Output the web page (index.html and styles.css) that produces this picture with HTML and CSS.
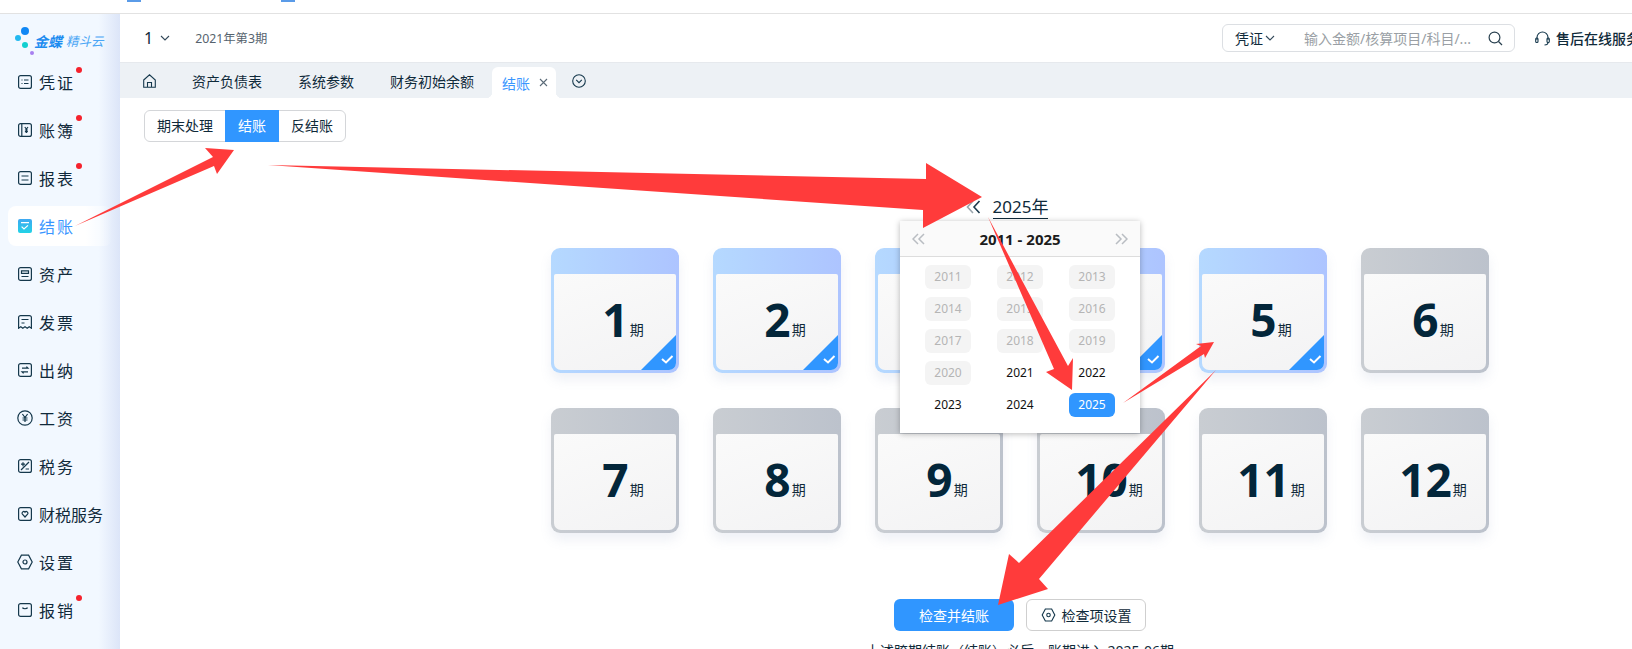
FILE: index.html
```html
<!DOCTYPE html>
<html lang="zh-CN">
<head>
    <meta charset="UTF-8">
    <title>结账</title>
    <link rel="stylesheet" href="styles.css">
</head>
<body>
<div class="page">
    <div class="strip">
        <i class="strip-mark"></i>
        <i class="strip-mark strip-mark-2"></i>
    </div>
    <div class="app">
        <aside class="side">
            <div class="logo">
                <svg class="logo-dots" width="24" height="34" viewBox="0 0 24 34">
                    <circle cx="10" cy="8" r="4" fill="#0f87f5"/>
                    <circle cx="3" cy="15" r="3" fill="#22b8f0"/>
                    <circle cx="10" cy="22" r="3" fill="#12cfd0"/>
                    <circle cx="17" cy="30" r="2" fill="#a880f0"/>
                </svg>
                <span class="logo-a">金蝶</span><span class="logo-b">精斗云</span>
            </div>
            <ul class="menu">
                <li class="menu-item">
                    <svg class="ico" viewBox="0 0 14 14"><rect x=".6" y=".6" width="12.8" height="12.8" rx="2"/><path d="M3.5 5h1M6 5h4.5M3.5 8.5h1M6 8.5h4.5"/></svg>
                    <span class="two">凭证</span><b class="dot"></b>
                </li>
                <li class="menu-item">
                    <svg class="ico" viewBox="0 0 14 14"><rect x=".6" y=".6" width="12.8" height="12.8" rx="2"/><path d="M3.8 .6v12.8M6.8 4l1.6 2 1.6-2M8.4 6v4M6.9 7h3M6.9 8.6h3"/></svg>
                    <span class="two">账簿</span><b class="dot"></b>
                </li>
                <li class="menu-item">
                    <svg class="ico" viewBox="0 0 14 14"><rect x=".6" y=".6" width="12.8" height="12.8" rx="2"/><path d="M3.5 5h7M3.5 9h7"/></svg>
                    <span class="two">报表</span><b class="dot"></b>
                </li>
                <li class="menu-item menu-on">
                    <svg class="ico ico-on" viewBox="0 0 14 14">
                        <defs>
                            <linearGradient id="icoOn" x1="0" y1="0" x2="0" y2="1">
                                <stop offset="0" stop-color="#3fa8f2"/>
                                <stop offset="1" stop-color="#22d3e6"/>
                            </linearGradient>
                        </defs>
                        <rect width="14" height="14" rx="2" fill="url(#icoOn)"/>
                        <path d="M3 3.6h8M3.6 7.6l2.4 2.4 4-3.6"/>
                    </svg>
                    <span class="two">结账</span>
                </li>
                <li class="menu-item">
                    <svg class="ico" viewBox="0 0 14 14"><rect x=".6" y=".6" width="12.8" height="12.8" rx="2"/><path d="M3.5 3.8h7v2.6h-7zM3.5 9.5h7"/></svg>
                    <span class="two">资产</span>
                </li>
                <li class="menu-item">
                    <svg class="ico" viewBox="0 0 14 14"><path d="M2.6.6h8.8a2 2 0 0 1 2 2v10.6l-2.2-1.4-2 1.4-2.2-1.4-2.2 1.4-2-1.4-2.2 1.4V2.6a2 2 0 0 1 2-2zM3.5 4.5h7M3.5 8h3"/></svg>
                    <span class="two">发票</span>
                </li>
                <li class="menu-item">
                    <svg class="ico" viewBox="0 0 14 14"><rect x=".6" y=".6" width="12.8" height="12.8" rx="2"/><path d="M4 5.2h6L8.4 3.6M10 8.8H4l1.6 1.6"/></svg>
                    <span class="two">出纳</span>
                </li>
                <li class="menu-item">
                    <svg class="ico ico-big" viewBox="0 0 16 16"><circle cx="8" cy="8" r="7.2"/><path d="M5.4 4l2.6 3.6L10.6 4M8 7.6V12M5.5 8h5M5.5 10h5"/></svg>
                    <span class="two">工资</span>
                </li>
                <li class="menu-item">
                    <svg class="ico" viewBox="0 0 14 14"><rect x=".6" y=".6" width="12.8" height="12.8" rx="2"/><path d="M3 11l8-8M3 5.2h4M5 3.2v4M7.6 10h3.4"/></svg>
                    <span class="two">税务</span>
                </li>
                <li class="menu-item">
                    <svg class="ico" viewBox="0 0 14 14"><rect x=".6" y=".6" width="12.8" height="12.8" rx="2"/><path d="M7 10L4.4 7.2a1.6 1.6 0 0 1 2.6-2 1.6 1.6 0 0 1 2.6 2z"/></svg>
                    <span>财税服务</span>
                </li>
                <li class="menu-item">
                    <svg class="ico ico-big" viewBox="0 0 16 16"><path d="M4.4 1.2h7.2L15.2 8l-3.6 6.8H4.4L.8 8z"/><circle cx="8" cy="8" r="2"/></svg>
                    <span class="two">设置</span>
                </li>
                <li class="menu-item">
                    <svg class="ico" viewBox="0 0 14 14"><rect x=".6" y=".6" width="12.8" height="12.8" rx="2"/><path d="M4.4 4.6c.8 1.5 4.400 1.500 5.200 0"/></svg>
                    <span class="two">报销</span><b class="dot"></b>
                </li>
            </ul>
        </aside>

        <main class="main">
            <header class="head">
                <div class="head-left">
                    <span class="book">1</span>
                    <svg class="chev" width="10" height="6" viewBox="0 0 10 6"><path d="M1 1l4 4 4-4"/></svg>
                    <span class="period">2021年第3期</span>
                </div>
                <div class="search">
                    <span class="search-type">凭证</span>
                    <svg class="chev" width="10" height="6" viewBox="0 0 10 6"><path d="M1 1l4 4 4-4"/></svg>
                    <span class="search-text">输入金额/核算项目/科目/...</span>
                    <svg class="search-ico" width="15" height="15" viewBox="0 0 15 15"><circle cx="6.500" cy="6.500" r="5.400"/><path d="M10.500 10.500l3.500 3.500"/></svg>
                </div>
                <div class="service">
                    <svg class="service-ico" width="15" height="15" viewBox="0 0 15 15"><path d="M2 9V6.500a5.500 5.500 0 0 1 11 0V9"/><rect x=".7" y="7" width="2.300" height="4.500" rx="1"/><rect x="12" y="7" width="2.300" height="4.500" rx="1"/><path d="M13 11.500c0 1.500-1.500 2.500-3.500 2.500"/></svg>
                    <span>售后在线服务</span>
                </div>
            </header>

            <nav class="tabs">
                <svg class="tab-home" width="13" height="14" viewBox="0 0 13 14"><path d="M.7 6L6.500.8 12.300 6v7.300H.7zM4.500 13.300V8.500h4v4.800"/></svg>
                <span class="tab">资产负债表</span>
                <span class="tab">系统参数</span>
                <span class="tab">财务初始余额</span>
                <span class="tab-on">结账
                    <svg class="tab-x" width="9" height="9" viewBox="0 0 9 9"><path d="M1 1l7 7M8 1L1 8"/></svg>
                </span>
                <svg class="tab-more" width="14" height="14" viewBox="0 0 14 14"><circle cx="7" cy="7" r="6.300"/><path d="M4.200 5.800L7 8.600l2.800-2.800"/></svg>
            </nav>

            <section class="content">
                <div class="switch">
                    <span class="switch-item">期末处理</span>
                    <span class="switch-item switch-on">结账</span>
                    <span class="switch-item">反结账</span>
                </div>

                <div class="year-row">
                    <svg class="year-prev" width="15" height="14" viewBox="0 0 15 14"><path class="back" d="M7 1L1.500 7 7 13"/><path d="M13.500 1L8 7l5.500 6"/></svg>
                    <span class="year-now">2025年</span>
                </div>

                <div class="cards">
                    <div class="card"><div class="card-body"><span class="num">1</span><span class="unit">期</span>
                        <svg class="mark" width="35" height="35" viewBox="0 0 35 35"><path class="mark-bg" d="M35 0v35H0z"/><path class="mark-ok" d="M21 24l4 3.500 6.500-6.500"/></svg></div></div>
                    <div class="card"><div class="card-body"><span class="num">2</span><span class="unit">期</span>
                        <svg class="mark" width="35" height="35" viewBox="0 0 35 35"><path class="mark-bg" d="M35 0v35H0z"/><path class="mark-ok" d="M21 24l4 3.500 6.500-6.500"/></svg></div></div>
                    <div class="card"><div class="card-body"><span class="num">3</span><span class="unit">期</span></div></div>
                    <div class="card"><div class="card-body"><span class="num">4</span><span class="unit">期</span>
                        <svg class="mark" width="35" height="35" viewBox="0 0 35 35"><path class="mark-bg" d="M35 0v35H0z"/><path class="mark-ok" d="M21 24l4 3.500 6.500-6.500"/></svg></div></div>
                    <div class="card"><div class="card-body"><span class="num">5</span><span class="unit">期</span>
                        <svg class="mark" width="35" height="35" viewBox="0 0 35 35"><path class="mark-bg" d="M35 0v35H0z"/><path class="mark-ok" d="M21 24l4 3.500 6.500-6.500"/></svg></div></div>
                    <div class="card card-off"><div class="card-body"><span class="num">6</span><span class="unit">期</span></div></div>
                    <div class="card card-off"><div class="card-body"><span class="num">7</span><span class="unit">期</span></div></div>
                    <div class="card card-off"><div class="card-body"><span class="num">8</span><span class="unit">期</span></div></div>
                    <div class="card card-off"><div class="card-body"><span class="num">9</span><span class="unit">期</span></div></div>
                    <div class="card card-off"><div class="card-body"><span class="num">10</span><span class="unit">期</span></div></div>
                    <div class="card card-off"><div class="card-body"><span class="num">11</span><span class="unit">期</span></div></div>
                    <div class="card card-off"><div class="card-body"><span class="num">12</span><span class="unit">期</span></div></div>
                </div>

                <div class="actions">
                    <span class="btn btn-main">检查并结账</span>
                    <span class="btn">
                        <svg class="btn-ico" width="15" height="14" viewBox="0 0 16 16"><path d="M4.400 1.200h7.200L15.200 8l-3.600 6.800H4.400L.8 8z"/><circle cx="8" cy="8" r="2"/></svg>
                        检查项设置
                    </span>
                </div>
                <p class="note">上述跨期结账（结账）必后，账期进入 2025-06期</p>

                <div class="pop">
                    <div class="pop-head">
                        <svg class="pop-arr" width="13" height="12" viewBox="0 0 13 12"><path d="M6 1L1 6l5 5M12 1L7 6l5 5"/></svg>
                        <span class="pop-title">2011 - 2025</span>
                        <svg class="pop-arr" width="13" height="12" viewBox="0 0 13 12"><path d="M1 1l5 5-5 5M7 1l5 5-5 5"/></svg>
                    </div>
                    <div class="pop-years">
                        <span class="yr yr-off">2011</span><span class="yr yr-off">2012</span><span class="yr yr-off">2013</span>
                        <span class="yr yr-off">2014</span><span class="yr yr-off">2015</span><span class="yr yr-off">2016</span>
                        <span class="yr yr-off">2017</span><span class="yr yr-off">2018</span><span class="yr yr-off">2019</span>
                        <span class="yr yr-off">2020</span><span class="yr">2021</span><span class="yr">2022</span>
                        <span class="yr">2023</span><span class="yr">2024</span><span class="yr yr-on">2025</span>
                    </div>
                </div>
            </section>
        </main>
    </div>

    <!-- 标注箭头 -->
    <svg class="arrows" width="1632" height="649" viewBox="0 0 1632 649">
        <polygon points="75,226 213,157 205,148 234,150 217,174 214,166"/>
        <polygon points="268,165 926,179 926,163 982,197 923,228 923,210"/>
        <polygon points="988,217 1068,366 1073,358 1072,390 1046,372 1054,369"/>
        <polygon points="1123,403 1201,346 1196,344 1214,342 1205,358 1204,354"/>
        <polygon points="1216,370 1039,579 1048,589 998,605 1009,554 1019,563"/>
    </svg>
</div>
</body>
</html>
```

FILE: styles.css
```css
* {
    padding: 0;
    margin: 0;
    list-style: none;
    box-sizing: border-box;
}

body {
    font-family: "Noto Sans", "Noto Sans CJK SC", sans-serif;
    color: #0f2a3a;
    background: #fff;
    overflow: hidden;
}

.page {
    position: relative;
    width: 1632px;
    height: 649px;
    overflow: hidden;
}

.strip {
    display: flex;
    height: 14px;
    padding-left: 127px;
    border-bottom: 1px solid #e2e2e2;
}

.strip-mark {
    width: 14px;
    height: 2px;
    background: #5a9be8;
}

.strip-mark-2 {
    margin-left: 140px;
}

.app {
    display: flex;
    height: 635px;
}

/* 左侧菜单 */
.side {
    flex: none;
    width: 120px;
    background: linear-gradient(90deg, #f2f8ff 0, #f2f8ff 82%, #dce5f8 100%);
}

.logo {
    display: flex;
    align-items: center;
    height: 48px;
    padding-left: 15px;
    font-style: italic;
    white-space: nowrap;
}

.logo-dots {
    flex: none;
    margin-top: 3px;
    margin-right: -5px;
}

.logo-a {
    font-size: 14px;
    font-weight: 700;
    color: #1d8cf0;
    margin-top: 5px;
}

.logo-b {
    margin-left: 4px;
    margin-top: 5px;
    font-size: 12.500px;
    color: #4aa6f5;
}

.menu-item {
    position: relative;
    display: flex;
    align-items: center;
    height: 40px;
    margin: 0 8px 8px;
    padding-left: 10px;
    padding-bottom: 1px;
    font-size: 16px;
    color: #10293a;
}

.menu-on {
    color: #3a96ff;
    border-radius: 8px;
    background: linear-gradient(90deg, #fff 75%, rgba(255, 255, 255, 0));
}

.two {
    letter-spacing: 2px;
}

.ico {
    flex: none;
    width: 14px;
    height: 14px;
    margin-right: 7px;
    fill: none;
    stroke: #15384c;
    stroke-width: 1.200;
}

.ico-big {
    width: 16px;
    height: 16px;
    margin: 0 6px 0 -1px;
}

.ico-on rect {
    stroke: none;
}

.ico-on path {
    stroke: #fff;
}

.dot {
    position: absolute;
    left: 68px;
    top: 5px;
    width: 6px;
    height: 6px;
    border-radius: 50%;
    background: #f5222d;
}

/* 右侧内容 */
.main {
    flex: none;
    width: 1800px;
    background: #fff;
    border-top-left-radius: 18px;
}

.head {
    display: flex;
    align-items: center;
    height: 49px;
    padding-left: 24px;
    border-bottom: 1px solid #e6e9ed;
    white-space: nowrap;
}

.head-left {
    display: flex;
    align-items: center;
    flex: none;
    width: 1078px;
}

.book {
    font-size: 16px;
    margin-right: 7px;
}

.chev {
    fill: none;
    stroke: #33495a;
    stroke-width: 1.100;
}

.period {
    margin-left: 25px;
    font-size: 12.300px;
    color: #56636e;
}

.search {
    display: flex;
    align-items: center;
    flex: none;
    width: 293px;
    height: 28px;
    padding-left: 12px;
    border: 1px solid #dcdfe3;
    border-radius: 6px;
    font-size: 14px;
}

.search-type {
    margin-right: 2px;
}

.search-text {
    width: 184px;
    margin-left: 29px;
    color: #9a9fa5;
}

.search-ico {
    fill: none;
    stroke: #29404f;
    stroke-width: 1.200;
}

.service {
    display: flex;
    align-items: center;
    margin-left: 20px;
    font-size: 14px;
    font-weight: 500;
}

.service-ico {
    margin-right: 6px;
    fill: none;
    stroke: #15384c;
    stroke-width: 1.100;
}

.tabs {
    display: flex;
    align-items: center;
    height: 35px;
    padding-left: 23px;
    background: #edf1f5;
    font-size: 14px;
}

.tab-home {
    margin-right: 36px;
    fill: none;
    stroke: #15384c;
    stroke-width: 1.100;
}

.tab {
    margin-right: 36px;
}

.tab-on {
    position: relative;
    display: flex;
    align-items: center;
    align-self: flex-end;
    width: 64px;
    height: 31px;
    margin-left: -18px;
    padding-left: 10px;
    border-radius: 6px 6px 0 0;
    background: #fff;
    color: #3a96ff;
}

.tab-on::before,
.tab-on::after {
    content: "";
    position: absolute;
    bottom: 0;
    width: 6px;
    height: 6px;
}

.tab-on::before {
    left: -6px;
    background: radial-gradient(circle at 0 0, #edf1f5 6px, #fff 6.500px);
}

.tab-on::after {
    right: -6px;
    background: radial-gradient(circle at 100% 0, #edf1f5 6px, #fff 6.500px);
}

.tab-x {
    margin-left: 9px;
    fill: none;
    stroke: #5b6b78;
    stroke-width: 1.100;
}

.tab-more {
    margin-left: 16px;
    fill: none;
    stroke: #15384c;
    stroke-width: 1.100;
}

.content {
    position: relative;
    height: 537px;
    padding-top: 12px;
}

.switch {
    display: inline-flex;
    height: 32px;
    margin-left: 24px;
    border: 1px solid #d4d6d9;
    border-radius: 6px;
    font-size: 14px;
    line-height: 30px;
    vertical-align: top;
}

.switch-item {
    padding: 0 12px;
}

.switch-on {
    height: 32px;
    margin-top: -1px;
    padding: 0 13px;
    line-height: 32px;
    background: #3096ff;
    color: #fff;
}

.year-row {
    display: flex;
    align-items: center;
    justify-content: center;
    height: 30px;
    margin-top: 50px;
    padding-right: 26px;
}

.year-prev {
    margin-right: 12px;
    fill: none;
    stroke: #1d3a4d;
    stroke-width: 1.600;
}

.year-prev .back {
    stroke: #9aa5ad;
}

.year-now {
    font-size: 17px;
    line-height: 22px;
    border-bottom: 1px solid #0f2a3a;
}

/* 期间卡片 */
.cards {
    display: grid;
    grid-template-columns: repeat(6, 128px);
    gap: 35px 34px;
    justify-content: center;
    margin-top: 26px;
}

.card {
    height: 125px;
    padding: 26px 3px 3px;
    border-radius: 9px;
    background: linear-gradient(90deg, #b5d9ff, #adc4ff);
    box-shadow: 0 7px 12px rgba(120, 140, 180, .12);
}

.card-off {
    background: linear-gradient(90deg, #c9cdd2, #bcc2cc);
}

.card-body {
    position: relative;
    display: flex;
    align-items: baseline;
    justify-content: center;
    height: 96px;
    padding-left: 16px;
    border-radius: 2px 2px 7px 7px;
    overflow: hidden;
    background: linear-gradient(160deg, #fafafa, #f3f3f4);
    line-height: 90px;
}

.num {
    font-size: 46px;
    font-weight: 700;
    color: #03263a;
}

.unit {
    font-size: 14px;
    margin-left: 1px;
    transform: translateY(-2px);
}

.mark {
    position: absolute;
    right: 0;
    bottom: 0;
}

.mark-bg {
    fill: #3096ff;
}

.mark-ok {
    fill: none;
    stroke: #fff;
    stroke-width: 2;
}

.actions {
    display: flex;
    justify-content: center;
    gap: 12px;
    margin-top: 66px;
}

.btn {
    display: flex;
    align-items: center;
    justify-content: center;
    width: 120px;
    height: 32px;
    border: 1px solid #cfcfcf;
    border-radius: 6px;
    font-size: 14px;
}

.btn-main {
    border: 0;
    background: #3096ff;
    color: #fff;
}

.btn-ico {
    margin-right: 6px;
    fill: none;
    stroke: #15384c;
    stroke-width: 1.300;
}

.note {
    margin-top: 10px;
    text-align: center;
    font-size: 14px;
    line-height: 20px;
}

/* 年份弹层 */
.pop {
    position: absolute;
    left: 780px;
    top: 123px;
    width: 240px;
    height: 212px;
    background: #fff;
    box-shadow: 0 1px 6px rgba(0, 0, 0, .28);
}

.pop-head {
    display: flex;
    align-items: center;
    justify-content: space-between;
    height: 36px;
    padding: 0 12px;
    background: #fafafa;
    border-bottom: 1px solid #ddd;
}

.pop-arr {
    fill: none;
    stroke: #b9bdc2;
    stroke-width: 1.500;
}

.pop-title {
    font-size: 15px;
    font-weight: 700;
    color: #1c1c1c;
}

.pop-years {
    display: grid;
    grid-template-columns: repeat(3, 46px);
    gap: 8px 26px;
    justify-content: center;
    padding-top: 8px;
}

.yr {
    height: 24px;
    border-radius: 6px;
    text-align: center;
    font-size: 12px;
    line-height: 24px;
    color: #111;
}

.yr-off {
    background: #f4f4f4;
    color: #b5b5b5;
}

.yr-on {
    background: #3096ff;
    color: #fff;
}

.arrows {
    position: absolute;
    left: 0;
    top: 0;
    fill: #ff3b3b;
    pointer-events: none;
}
```
